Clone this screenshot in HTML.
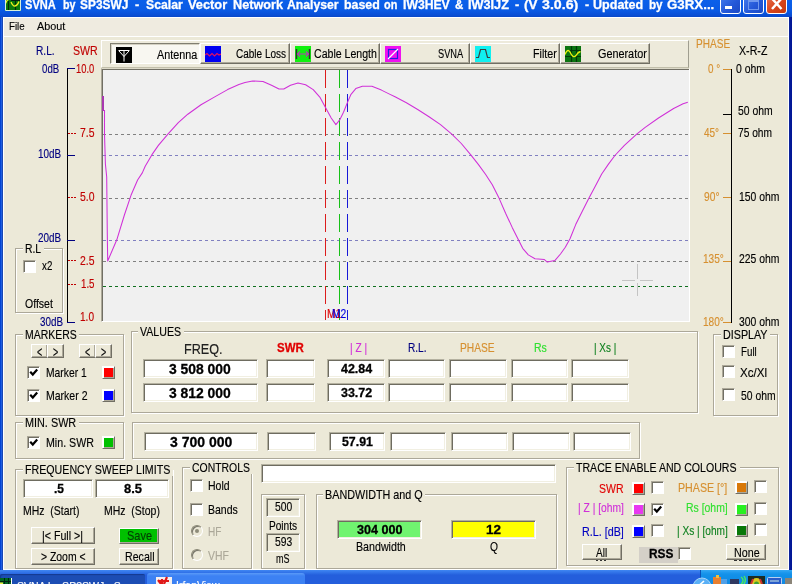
<!DOCTYPE html>
<html lang="en"><head><meta charset="utf-8"><title>SVNA by SP3SWJ</title>
<style>
html,body{margin:0;padding:0}
body{width:792px;height:584px;overflow:hidden;position:relative;background:#ECE9D8;font-family:"Liberation Sans",sans-serif;font-size:12px}
#w{position:absolute;left:0;top:0;width:792px;height:584px;overflow:hidden;will-change:transform}
#w div,#w span{position:absolute}
.t{white-space:nowrap;transform-origin:0 0;display:block;-webkit-text-stroke:0.15px}
.pre{white-space:pre}
.grp{box-sizing:border-box;border:1px solid #aca899;box-shadow:1px 1px 0 #fff,inset 1px 1px 0 #fff}
.sunk{box-sizing:border-box;border:1px solid;border-color:#b4b1a0 #fff #fff #b4b1a0;box-shadow:inset 1px 1px 0 #6e6c60,inset -1px -1px 0 #f1efe2}
.btn{box-sizing:border-box;border:1px solid;border-color:#fff #716f64 #716f64 #fff;box-shadow:inset -1px -1px 0 #aca899}
.chk{box-sizing:border-box;background:#fff;border:1px solid;border-color:#aca899 #fff #fff #aca899;box-shadow:inset 1px 1px 0 #716f64}
.csq{box-sizing:border-box;border:1px solid;border-color:#fff #716f64 #716f64 #fff;box-shadow:inset 1px 1px 0 #fff,inset -1px -1px 0 #aca899}
.rad{box-sizing:border-box;border-radius:50%;background:#ECE9D8;border:1px solid;border-color:#8a8876 #fff #fff #8a8876;box-shadow:inset 1px 1px 0 #77756a}
</style></head>
<body><div id="w">
<div style="left:0px;top:0px;width:792px;height:17px;background:linear-gradient(#0b60ea 0,#0a5ae4 60%,#0950d8 85%,#0a48c8 100%);"></div>
<div style="left:4px;top:18px;width:784px;height:18px;background:#efebe0;"></div>
<div style="left:0px;top:17px;width:3px;height:553px;background:linear-gradient(90deg,#0040d0 0,#0848d6 1px,#2060e2 1px,#1f5ce0 2px,#1a48b4 2px);"></div>
<div style="left:789px;top:17px;width:3px;height:553px;background:linear-gradient(90deg,#10289c,#041a98 50%,#001494);"></div>
<div style="left:3px;top:569px;width:786px;height:1px;background:#fff;"></div>
<div style="left:3px;top:17px;width:1px;height:552px;background:#fff;"></div>
<div style="left:788px;top:17px;width:1px;height:552px;background:#fff;"></div>
<svg style="position:absolute;left:5px;top:0" width="16" height="11" viewBox="0 0 16 11"><rect width="16" height="11" fill="#0a7a0c"/><rect x="6" y="0" width="9" height="1" fill="#021"/><path d="M3.5 1V10M10.5 1V10" stroke="#032a06" stroke-width="1.2"/><path d="M0.5 3.5 Q2 0 3.5 -0.5 M6 2 Q8 6.5 10 6 Q12.5 5.5 14 1.5" fill="none" stroke="#f0f020" stroke-width="1.3"/><path d="M0.5 0V10.5H15.5V0" fill="none" stroke="#d8f0d8" stroke-width="1"/></svg>
<span class="t" style="left:25.0px;top:-2.2px;font-size:13px;line-height:13px;color:#fff;transform:scaleX(0.853);font-weight:bold;-webkit-text-stroke:0.3px;">SVNA</span>
<span class="t" style="left:62.5px;top:-2.2px;font-size:13px;line-height:13px;color:#fff;transform:scaleX(0.824);font-weight:bold;-webkit-text-stroke:0.3px;">by</span>
<span class="t" style="left:80.0px;top:-2.2px;font-size:13px;line-height:13px;color:#fff;transform:scaleX(0.916);font-weight:bold;-webkit-text-stroke:0.3px;">SP3SWJ</span>
<span class="t" style="left:135.0px;top:-2.2px;font-size:13px;line-height:13px;color:#fff;transform:scaleX(0.970);font-weight:bold;-webkit-text-stroke:0.3px;">-</span>
<span class="t" style="left:145.8px;top:-2.2px;font-size:13px;line-height:13px;color:#fff;transform:scaleX(0.940);font-weight:bold;-webkit-text-stroke:0.3px;">Scalar</span>
<span class="t" style="left:188.3px;top:-2.2px;font-size:13px;line-height:13px;color:#fff;transform:scaleX(0.986);font-weight:bold;-webkit-text-stroke:0.3px;">Vector</span>
<span class="t" style="left:232.5px;top:-2.2px;font-size:13px;line-height:13px;color:#fff;transform:scaleX(0.975);font-weight:bold;-webkit-text-stroke:0.3px;">Network</span>
<span class="t" style="left:286.7px;top:-2.2px;font-size:13px;line-height:13px;color:#fff;transform:scaleX(0.940);font-weight:bold;-webkit-text-stroke:0.3px;">Analyser</span>
<span class="t" style="left:344.2px;top:-2.2px;font-size:13px;line-height:13px;color:#fff;transform:scaleX(0.953);font-weight:bold;-webkit-text-stroke:0.3px;">based</span>
<span class="t" style="left:384.2px;top:-2.2px;font-size:13px;line-height:13px;color:#fff;transform:scaleX(0.837);font-weight:bold;-webkit-text-stroke:0.3px;">on</span>
<span class="t" style="left:403.3px;top:-2.2px;font-size:13px;line-height:13px;color:#fff;transform:scaleX(0.937);font-weight:bold;-webkit-text-stroke:0.3px;">IW3HEV</span>
<span class="t" style="left:455.0px;top:-2.2px;font-size:13px;line-height:13px;color:#fff;transform:scaleX(0.884);font-weight:bold;-webkit-text-stroke:0.3px;">&amp;</span>
<span class="t" style="left:468.3px;top:-2.2px;font-size:13px;line-height:13px;color:#fff;transform:scaleX(0.976);font-weight:bold;-webkit-text-stroke:0.3px;">IW3IJZ</span>
<span class="t" style="left:515.0px;top:-2.2px;font-size:13px;line-height:13px;color:#fff;transform:scaleX(0.970);font-weight:bold;-webkit-text-stroke:0.3px;">-</span>
<span class="t" style="left:524.2px;top:-2.2px;font-size:13px;line-height:13px;color:#fff;transform:scaleX(1.023);font-weight:bold;-webkit-text-stroke:0.3px;">(V</span>
<span class="t" style="left:541.7px;top:-2.2px;font-size:13px;line-height:13px;color:#fff;transform:scaleX(1.092);font-weight:bold;-webkit-text-stroke:0.3px;">3.0.6)</span>
<span class="t" style="left:584.5px;top:-2.2px;font-size:13px;line-height:13px;color:#fff;transform:scaleX(0.947);font-weight:bold;-webkit-text-stroke:0.3px;">-</span>
<span class="t" style="left:593.0px;top:-2.2px;font-size:13px;line-height:13px;color:#fff;transform:scaleX(0.965);font-weight:bold;-webkit-text-stroke:0.3px;">Updated</span>
<span class="t" style="left:648.9px;top:-2.2px;font-size:13px;line-height:13px;color:#fff;transform:scaleX(0.896);font-weight:bold;-webkit-text-stroke:0.3px;">by</span>
<span class="t" style="left:666.9px;top:-2.2px;font-size:13px;line-height:13px;color:#fff;transform:scaleX(1.023);font-weight:bold;-webkit-text-stroke:0.3px;">G3RX...</span>
<div style="left:720px;top:-8px;width:21px;height:22px;background:linear-gradient(135deg,#4a82f0,#2458d8 60%,#1c49c4);border:1px solid #fff;border-radius:3px;box-sizing:border-box;overflow:hidden;"><div style="left:4px;top:13px;width:7px;height:3px;background:#fff"></div></div>
<div style="left:743px;top:-8px;width:21px;height:22px;background:linear-gradient(135deg,#4a82f0,#2458d8 60%,#1c49c4);border:1px solid #fff;border-radius:3px;box-sizing:border-box;overflow:hidden;"><div style="left:4px;top:6px;width:11px;height:11px;border:1px solid #6f98ee;border-top-width:3px;box-sizing:border-box;"></div></div>
<div style="left:766px;top:-8px;width:21px;height:22px;background:linear-gradient(135deg,#ea7a5c,#d8451c 55%,#c43a10);border:1px solid #fff;border-radius:3px;box-sizing:border-box;overflow:hidden;"><svg style="position:absolute;left:0;top:0" width="19" height="19" viewBox="0 0 19 19"><path d="M5 5.5 L14.5 16 M14.5 5.5 L5 16" stroke="#fff" stroke-width="2.5"/></svg></div>
<div style="left:3px;top:17px;width:786px;height:1px;background:#fff;"></div>
<div style="left:3px;top:36px;width:786px;height:1px;background:#fff;"></div>
<span class="t" style="left:8.6px;top:20.2px;font-size:11.6px;line-height:11.6px;color:#000;transform:scaleX(0.835);">File</span>
<span class="t" style="left:36.9px;top:20.2px;font-size:11.6px;line-height:11.6px;color:#000;transform:scaleX(0.934);">About</span>
<span class="t" style="left:35.7px;top:44.0px;font-size:13px;line-height:13px;color:#000080;transform:scaleX(0.780);">R.L.</span>
<span class="t" style="left:72.9px;top:44.0px;font-size:13px;line-height:13px;color:#c00000;transform:scaleX(0.814);">SWR</span>
<span class="t" style="left:695.8px;top:37.0px;font-size:13px;line-height:13px;color:#d69030;transform:scaleX(0.774);">PHASE</span>
<span class="t" style="left:738.7px;top:44.0px;font-size:13px;line-height:13px;color:#000;transform:scaleX(0.819);">X-R-Z</span>
<div style="left:67px;top:68px;width:1px;height:255px;background:#000;"></div>
<div style="left:67px;top:68px;width:8px;height:1px;background:#000080;"></div>
<div style="left:67px;top:155px;width:8px;height:1px;background:#000080;"></div>
<div style="left:67px;top:240px;width:8px;height:1px;background:#000080;"></div>
<div style="left:67px;top:322px;width:8px;height:1px;background:#000080;"></div>
<div style="left:68px;top:133px;width:2px;height:1px;background:#c00000;"></div>
<div style="left:71px;top:133px;width:2px;height:1px;background:#c00000;"></div>
<div style="left:74px;top:133px;width:2px;height:1px;background:#c00000;"></div>
<div style="left:68px;top:197px;width:2px;height:1px;background:#c00000;"></div>
<div style="left:71px;top:197px;width:2px;height:1px;background:#c00000;"></div>
<div style="left:74px;top:197px;width:2px;height:1px;background:#c00000;"></div>
<div style="left:68px;top:260px;width:2px;height:1px;background:#c00000;"></div>
<div style="left:71px;top:260px;width:2px;height:1px;background:#c00000;"></div>
<div style="left:74px;top:260px;width:2px;height:1px;background:#c00000;"></div>
<div style="left:68px;top:284px;width:2px;height:1px;background:#c00000;"></div>
<div style="left:71px;top:284px;width:2px;height:1px;background:#c00000;"></div>
<div style="left:74px;top:284px;width:2px;height:1px;background:#c00000;"></div>
<span class="t" style="left:42.0px;top:62.0px;font-size:13px;line-height:13px;color:#000080;transform:scaleX(0.744);">0dB</span>
<span class="t" style="left:38.0px;top:147.0px;font-size:13px;line-height:13px;color:#000080;transform:scaleX(0.761);">10dB</span>
<span class="t" style="left:38.0px;top:231.0px;font-size:13px;line-height:13px;color:#000080;transform:scaleX(0.761);">20dB</span>
<span class="t" style="left:40.1px;top:315.0px;font-size:13px;line-height:13px;color:#000080;transform:scaleX(0.758);">30dB</span>
<span class="t" style="left:75.5px;top:62.0px;font-size:13px;line-height:13px;color:#c00000;transform:scaleX(0.719);">10.0</span>
<span class="t" style="left:79.5px;top:126.0px;font-size:13px;line-height:13px;color:#c00000;transform:scaleX(0.802);">7.5</span>
<span class="t" style="left:79.5px;top:190.0px;font-size:13px;line-height:13px;color:#c00000;transform:scaleX(0.802);">5.0</span>
<span class="t" style="left:79.5px;top:254.0px;font-size:13px;line-height:13px;color:#c00000;transform:scaleX(0.802);">2.5</span>
<span class="t" style="left:80.5px;top:277.0px;font-size:13px;line-height:13px;color:#c00000;transform:scaleX(0.747);">1.5</span>
<span class="t" style="left:80.0px;top:310.0px;font-size:13px;line-height:13px;color:#c00000;transform:scaleX(0.775);">1.0</span>
<div style="left:731px;top:69px;width:1px;height:254px;background:#000;"></div>
<div style="left:723px;top:69px;width:8px;height:1px;background:#d69030;"></div>
<div style="left:723px;top:133px;width:8px;height:1px;background:#d69030;"></div>
<div style="left:723px;top:197px;width:8px;height:1px;background:#d69030;"></div>
<div style="left:723px;top:261px;width:8px;height:1px;background:#d69030;"></div>
<div style="left:723px;top:322px;width:8px;height:1px;background:#d69030;"></div>
<div style="left:723px;top:114px;width:8px;height:1px;background:#000;"></div>
<span class="t" style="left:707.8px;top:62.0px;font-size:13px;line-height:13px;color:#d69030;transform:scaleX(0.761);">0 °</span>
<span class="t" style="left:704.0px;top:126.0px;font-size:13px;line-height:13px;color:#d69030;transform:scaleX(0.768);">45°</span>
<span class="t" style="left:703.6px;top:189.5px;font-size:13px;line-height:13px;color:#d69030;transform:scaleX(0.788);">90°</span>
<span class="t" style="left:702.7px;top:252.0px;font-size:13px;line-height:13px;color:#d69030;transform:scaleX(0.777);">135°</span>
<span class="t" style="left:702.7px;top:315.0px;font-size:13px;line-height:13px;color:#d69030;transform:scaleX(0.777);">180°</span>
<span class="t" style="left:735.6px;top:62.0px;font-size:13px;line-height:13px;color:#000;transform:scaleX(0.803);">0 ohm</span>
<span class="t" style="left:737.5px;top:104.0px;font-size:13px;line-height:13px;color:#000;transform:scaleX(0.800);">50 ohm</span>
<span class="t" style="left:737.5px;top:126.0px;font-size:13px;line-height:13px;color:#000;transform:scaleX(0.784);">75 ohm</span>
<span class="t" style="left:738.7px;top:189.5px;font-size:13px;line-height:13px;color:#000;transform:scaleX(0.799);">150 ohm</span>
<span class="t" style="left:738.7px;top:252.0px;font-size:13px;line-height:13px;color:#000;transform:scaleX(0.799);">225 ohm</span>
<span class="t" style="left:738.7px;top:314.7px;font-size:13px;line-height:13px;color:#000;transform:scaleX(0.799);">300 ohm</span>
<div style="left:101px;top:40px;width:588px;height:28px;background:#edeadb;border:1px solid;border-color:#fff #a09e90 #c2bfab #fff;box-sizing:border-box;"></div>
<div style="left:110px;top:43px;width:90px;height:21px;background:#f8f7f1;border:1px solid #fff;border-top-color:#807e70;border-left-color:#807e70;box-sizing:border-box;box-shadow:inset 1px 1px 0 #d4d1c2;"></div>
<svg style="position:absolute;left:116px;top:47px" width="16" height="16" viewBox="0 0 16 16"><rect width="16" height="16" fill="#000"/><path d="M2.5 3.5H13.5M3 4L8 9.5L13 4M8 3.5V14.5" fill="none" stroke="#fff" stroke-width="1"/></svg>
<span class="t" style="left:157.0px;top:48.8px;font-size:12px;line-height:12px;color:#000;transform:scaleX(0.899);">Antenna</span>
<div style="left:200px;top:43px;width:90px;height:21px;border:1px solid;border-color:#fff #716f64 #716f64 #fff;box-shadow:inset -1px -1px 0 #aca899;box-sizing:border-box;"></div>
<svg style="position:absolute;left:205px;top:46px" width="16" height="16" viewBox="0 0 16 16"><rect width="16" height="16" fill="#0000f0"/><path d="M0 9L2 7.5L4.5 10L7 7.5L9.5 10L12 7.5L14 9L16 8" fill="none" stroke="#e01060" stroke-width="1.2"/></svg>
<span class="t" style="left:236.0px;top:47.8px;font-size:12px;line-height:12px;color:#000;transform:scaleX(0.833);">Cable Loss</span>
<div style="left:290px;top:43px;width:90px;height:21px;border:1px solid;border-color:#fff #716f64 #716f64 #fff;box-shadow:inset -1px -1px 0 #aca899;box-sizing:border-box;"></div>
<svg style="position:absolute;left:295px;top:46px" width="16" height="16" viewBox="0 0 16 16"><rect width="16" height="16" fill="#10f010"/><path d="M1.5 3V13M14.5 3V13" stroke="#303030" stroke-width="1.4"/><path d="M2.5 8H13.5M5 5.5L2.5 8L5 10.5M11 5.5L13.5 8L11 10.5" fill="none" stroke="#b040b0" stroke-width="1.2"/></svg>
<span class="t" style="left:313.6px;top:47.8px;font-size:12px;line-height:12px;color:#000;transform:scaleX(0.881);">Cable Length</span>
<div style="left:380px;top:43px;width:90px;height:21px;border:1px solid;border-color:#fff #716f64 #716f64 #fff;box-shadow:inset -1px -1px 0 #aca899;box-sizing:border-box;"></div>
<svg style="position:absolute;left:385px;top:46px" width="16" height="16" viewBox="0 0 16 16"><rect width="16" height="16" fill="#f010f0"/><rect x="3.5" y="3.5" width="9" height="9" fill="none" stroke="#2020e0" stroke-width="1.2"/><path d="M3 13L13 3" stroke="#fff" stroke-width="1.2"/></svg>
<span class="t" style="left:437.8px;top:47.8px;font-size:12px;line-height:12px;color:#000;transform:scaleX(0.771);">SVNA</span>
<div style="left:470px;top:43px;width:90px;height:21px;border:1px solid;border-color:#fff #716f64 #716f64 #fff;box-shadow:inset -1px -1px 0 #aca899;box-sizing:border-box;"></div>
<svg style="position:absolute;left:475px;top:46px" width="16" height="16" viewBox="0 0 16 16"><rect width="16" height="16" fill="#10f0f0"/><path d="M1 11.5H3.5L5.5 3.5H10.5L12.5 11.5H15" fill="none" stroke="#384040" stroke-width="1.2"/></svg>
<span class="t" style="left:532.7px;top:47.8px;font-size:12px;line-height:12px;color:#000;transform:scaleX(0.893);">Filter</span>
<div style="left:560px;top:43px;width:90px;height:21px;border:1px solid;border-color:#fff #716f64 #716f64 #fff;box-shadow:inset -1px -1px 0 #aca899;box-sizing:border-box;"></div>
<svg style="position:absolute;left:565px;top:46px" width="16" height="16" viewBox="0 0 16 16"><rect width="16" height="16" fill="#0c7410"/><path d="M6.5 0V16M11.5 0V16M4 4.5H16M0 10.5H16" stroke="#033808" stroke-width="1.2"/><path d="M0 8.5 Q2.5 2 5 6 Q8 13 11 9.5 Q13 6 15.5 5.5" fill="none" stroke="#e8f010" stroke-width="1.3"/></svg>
<span class="t" style="left:597.6px;top:47.8px;font-size:12px;line-height:12px;color:#000;transform:scaleX(0.903);">Generator</span>
<div style="left:101px;top:68px;width:589px;height:254px;background:#f0f0f0;border:1px solid #aca899;border-top-color:#dcd9c8;border-right-color:#fff;border-bottom-color:#fff;box-sizing:border-box;"></div>
<div style="left:102px;top:69px;width:587px;height:252px;border-left:1px solid #716f64;border-top:1px solid #716f64;box-sizing:border-box;"></div>
<svg style="position:absolute;left:0;top:0" width="792" height="584" viewBox="0 0 792 584"><path d="M103 134.5H689" stroke="#808080" stroke-width="1" stroke-dasharray="3 3" shape-rendering="crispEdges"/><path d="M103 198.5H689" stroke="#808080" stroke-width="1" stroke-dasharray="3 3" shape-rendering="crispEdges"/><path d="M103 261.5H689" stroke="#808080" stroke-width="1" stroke-dasharray="3 3" shape-rendering="crispEdges"/><path d="M103 155.5H689" stroke="#8080c0" stroke-width="1" stroke-dasharray="3 3" shape-rendering="crispEdges"/><path d="M103 240.5H689" stroke="#8080c0" stroke-width="1" stroke-dasharray="3 3" shape-rendering="crispEdges"/><path d="M103 286.5H689" stroke="#107020" stroke-width="1" stroke-dasharray="3 3" shape-rendering="crispEdges"/><path d="M325.5 70V320" stroke="#dc1c1c" stroke-width="1" stroke-dasharray="18 6" shape-rendering="crispEdges"/><path d="M339.5 70V320" stroke="#18c018" stroke-width="1" stroke-dasharray="18 6" shape-rendering="crispEdges"/><path d="M347.5 70V320" stroke="#1818d8" stroke-width="1" stroke-dasharray="18 6" shape-rendering="crispEdges"/><path d="M103 96V111" stroke="#a838b0" stroke-width="2"/><polyline fill="none" stroke="#d030d8" stroke-width="1.05" stroke-linejoin="round" points="104.5,110 104.5,134 105.4,164 106.7,177 107.3,234 107.7,261 116.8,239.8 124.4,215 131,195.3 137.6,180 142.3,172.9 145.2,166.3 151.8,154.9 158.4,145.4 167.9,134.1 178.3,122.7 187.8,114.2 201,104.7 214.3,97.1 227.6,89.6 238.9,84.5 245,82.6 252.6,81 263,81.4 271.5,85.2 279,89 283.8,89 290.5,85.2 298,83 305.6,84.8 313.2,89.6 319.8,97.1 325.5,107.6 331.2,118 335.9,124.6 339.7,119.9 343.5,112.3 347.7,101.9 351,94.3 355.8,88.6 362.4,86.2 371.9,86.3 381.4,90.1 389,93.9 395,96.8 406.4,102.8 417.7,109.5 429,116.7 440.5,124.6 451.8,134.1 461.3,143.5 470.8,154.9 478.3,164.4 485.5,174.2 492.3,184.8 499,198.1 505.6,213.2 512.2,227.4 518.9,240.7 522.7,248.3 528.3,254.9 535,258.7 544.4,259.6 547.3,262.1 554.8,260.6 560.5,254 565.3,247.3 570,238.8 575.7,224.6 582.3,211.3 589,198.1 595,186.7 601.7,174 608.3,164.4 614.9,155.5 624.4,145.4 636.7,134.1 645.2,127.4 658.5,118 673.6,108.5 683.1,103.8 687.8,102.3"/><path d="M637.5 264V279M637.5 283V296M622 280.5H635M640 280.5H653" stroke="#c4c4c4" stroke-width="1" shape-rendering="crispEdges"/></svg>
<span class="t" style="left:327.3px;top:307.8px;font-size:12px;line-height:12px;color:#e00000;transform:scaleX(0.860);">M1</span>
<span class="t" style="left:331.5px;top:307.8px;font-size:12px;line-height:12px;color:#0000e0;transform:scaleX(0.860);">M2</span>
<div class="grp" style="left:15px;top:248px;width:48px;height:65px;"></div>
<div style="left:22.5px;top:243px;width:21.1px;height:12px;background:#ECE9D8;"></div>
<span class="t" style="left:24.5px;top:242.0px;font-size:13px;line-height:13px;color:#000;transform:scaleX(0.796);">R.L</span>
<div class="chk" style="left:23px;top:260px;width:13px;height:13px;"></div>
<span class="t" style="left:41.9px;top:259.0px;font-size:13px;line-height:13px;color:#000;transform:scaleX(0.750);">x2</span>
<span class="t" style="left:25.4px;top:297.0px;font-size:13px;line-height:13px;color:#000;transform:scaleX(0.810);">Offset</span>
<div class="grp" style="left:15px;top:334px;width:109px;height:82px;"></div>
<div style="left:22.6px;top:329px;width:56.699999999999996px;height:12px;background:#ECE9D8;"></div>
<span class="t" style="left:24.6px;top:328.0px;font-size:13px;line-height:13px;color:#000;transform:scaleX(0.804);">MARKERS</span>
<div class="btn" style="left:31px;top:344px;width:17px;height:14px;background:#ECE9D8;"></div>
<div class="btn" style="left:47px;top:344px;width:17px;height:14px;background:#ECE9D8;"></div>
<div class="btn" style="left:79px;top:344px;width:17px;height:14px;background:#ECE9D8;"></div>
<div class="btn" style="left:95px;top:344px;width:17px;height:14px;background:#ECE9D8;"></div>
<span class="t" style="left:36.8px;top:344.3px;font-size:15px;line-height:15px;color:#000;transform:scaleX(0.594);">&lt;</span>
<span class="t" style="left:52.8px;top:344.3px;font-size:15px;line-height:15px;color:#000;transform:scaleX(0.594);">&gt;</span>
<span class="t" style="left:84.8px;top:344.3px;font-size:15px;line-height:15px;color:#000;transform:scaleX(0.594);">&lt;</span>
<span class="t" style="left:100.8px;top:344.3px;font-size:15px;line-height:15px;color:#000;transform:scaleX(0.594);">&gt;</span>
<div class="chk" style="left:27px;top:366px;width:13px;height:13px;"><svg width="13" height="13" viewBox="0 0 13 13" style="position:absolute;left:-1px;top:-1px"><path d="M3.2 5.8 L5.8 8.6 L10.2 3.6" fill="none" stroke="#000" stroke-width="2.2"/></svg></div>
<span class="t" style="left:45.5px;top:366.0px;font-size:13px;line-height:13px;color:#000;transform:scaleX(0.794);">Marker 1</span>
<div class="csq" style="left:102px;top:366px;width:13px;height:13px;background:#ff0000;"></div>
<div class="chk" style="left:27px;top:389px;width:13px;height:13px;"><svg width="13" height="13" viewBox="0 0 13 13" style="position:absolute;left:-1px;top:-1px"><path d="M3.2 5.8 L5.8 8.6 L10.2 3.6" fill="none" stroke="#000" stroke-width="2.2"/></svg></div>
<span class="t" style="left:45.5px;top:389.0px;font-size:13px;line-height:13px;color:#000;transform:scaleX(0.809);">Marker 2</span>
<div class="csq" style="left:102px;top:389px;width:13px;height:13px;background:#0000ff;"></div>
<div class="grp" style="left:15px;top:422px;width:109px;height:37px;"></div>
<div style="left:22.6px;top:417px;width:56.199999999999996px;height:12px;background:#ECE9D8;"></div>
<span class="t" style="left:24.6px;top:416.0px;font-size:13px;line-height:13px;color:#000;transform:scaleX(0.834);">MIN. SWR</span>
<div class="chk" style="left:27px;top:436px;width:13px;height:13px;"><svg width="13" height="13" viewBox="0 0 13 13" style="position:absolute;left:-1px;top:-1px"><path d="M3.2 5.8 L5.8 8.6 L10.2 3.6" fill="none" stroke="#000" stroke-width="2.2"/></svg></div>
<span class="t" style="left:45.5px;top:436.0px;font-size:13px;line-height:13px;color:#000;transform:scaleX(0.819);">Min. SWR</span>
<div class="csq" style="left:102px;top:436px;width:13px;height:13px;background:#00c000;"></div>
<div class="grp" style="left:131px;top:331px;width:567px;height:82px;"></div>
<div style="left:138px;top:326px;width:46px;height:12px;background:#ECE9D8;"></div>
<span class="t" style="left:140.0px;top:325.0px;font-size:13px;line-height:13px;color:#000;transform:scaleX(0.815);">VALUES</span>
<span class="t" style="left:183.8px;top:341.7px;font-size:14.5px;line-height:14.5px;color:#202020;transform:scaleX(0.871);">FREQ.</span>
<span class="t" style="left:277.2px;top:341.0px;font-size:13px;line-height:13px;color:#e00000;transform:scaleX(0.884);font-weight:bold;-webkit-text-stroke:0.3px;">SWR</span>
<span class="t" style="left:349.7px;top:341.0px;font-size:13px;line-height:13px;color:#d030d8;transform:scaleX(0.780);">| Z |</span>
<span class="t" style="left:407.5px;top:341.0px;font-size:13px;line-height:13px;color:#000080;transform:scaleX(0.776);">R.L.</span>
<span class="t" style="left:460.3px;top:341.0px;font-size:13px;line-height:13px;color:#d69030;transform:scaleX(0.787);">PHASE</span>
<span class="t" style="left:534.2px;top:341.0px;font-size:13px;line-height:13px;color:#30e030;transform:scaleX(0.806);">Rs</span>
<span class="t" style="left:593.6px;top:341.0px;font-size:13px;line-height:13px;color:#108020;transform:scaleX(0.762);">| Xs |</span>
<div class="sunk" style="left:143px;top:359px;width:115px;height:19px;background:#fff;"></div>
<div class="sunk" style="left:266px;top:359px;width:49px;height:19px;background:#fff;"></div>
<div class="sunk" style="left:327px;top:359px;width:58px;height:19px;background:#fff;"></div>
<div class="sunk" style="left:388px;top:359px;width:57px;height:19px;background:#fff;"></div>
<div class="sunk" style="left:449px;top:359px;width:58px;height:19px;background:#fff;"></div>
<div class="sunk" style="left:511px;top:359px;width:57px;height:19px;background:#fff;"></div>
<div class="sunk" style="left:571px;top:359px;width:58px;height:19px;background:#fff;"></div>
<div class="sunk" style="left:143px;top:383px;width:115px;height:19px;background:#fff;"></div>
<div class="sunk" style="left:266px;top:383px;width:49px;height:19px;background:#fff;"></div>
<div class="sunk" style="left:327px;top:383px;width:58px;height:19px;background:#fff;"></div>
<div class="sunk" style="left:388px;top:383px;width:57px;height:19px;background:#fff;"></div>
<div class="sunk" style="left:449px;top:383px;width:58px;height:19px;background:#fff;"></div>
<div class="sunk" style="left:511px;top:383px;width:57px;height:19px;background:#fff;"></div>
<div class="sunk" style="left:571px;top:383px;width:58px;height:19px;background:#fff;"></div>
<div class="grp" style="left:132px;top:422px;width:508px;height:37px;"></div>
<div class="sunk" style="left:144px;top:432px;width:114px;height:19px;background:#fff;"></div>
<div class="sunk" style="left:267px;top:432px;width:49px;height:19px;background:#fff;"></div>
<div class="sunk" style="left:329px;top:432px;width:56px;height:19px;background:#fff;"></div>
<div class="sunk" style="left:390px;top:432px;width:56px;height:19px;background:#fff;"></div>
<div class="sunk" style="left:451px;top:432px;width:57px;height:19px;background:#fff;"></div>
<div class="sunk" style="left:512px;top:432px;width:58px;height:19px;background:#fff;"></div>
<div class="sunk" style="left:573px;top:432px;width:58px;height:19px;background:#fff;"></div>
<span class="t pre" style="left:169.2px;top:361.7px;font-size:14.5px;line-height:14.5px;color:#000;transform:scaleX(0.958);font-weight:bold;-webkit-text-stroke:0.3px;">3 508 000</span>
<span class="t pre" style="left:169.2px;top:385.7px;font-size:14.5px;line-height:14.5px;color:#000;transform:scaleX(0.958);font-weight:bold;-webkit-text-stroke:0.3px;">3 812 000</span>
<span class="t pre" style="left:170.0px;top:434.7px;font-size:14.5px;line-height:14.5px;color:#000;transform:scaleX(0.966);font-weight:bold;-webkit-text-stroke:0.3px;">3 700 000</span>
<span class="t" style="left:340.9px;top:362.0px;font-size:13px;line-height:13px;color:#000;transform:scaleX(0.959);font-weight:bold;-webkit-text-stroke:0.3px;">42.84</span>
<span class="t" style="left:340.9px;top:386.0px;font-size:13px;line-height:13px;color:#000;transform:scaleX(0.959);font-weight:bold;-webkit-text-stroke:0.3px;">33.72</span>
<span class="t" style="left:341.6px;top:435.0px;font-size:13px;line-height:13px;color:#000;transform:scaleX(0.950);font-weight:bold;-webkit-text-stroke:0.3px;">57.91</span>
<div class="grp" style="left:713px;top:334px;width:65px;height:82px;"></div>
<div style="left:720.5px;top:329px;width:49.5px;height:12px;background:#ECE9D8;"></div>
<span class="t" style="left:722.5px;top:328.0px;font-size:13px;line-height:13px;color:#000;transform:scaleX(0.825);">DISPLAY</span>
<div class="chk" style="left:722px;top:345px;width:13px;height:13px;"></div>
<span class="t" style="left:740.5px;top:345.0px;font-size:13px;line-height:13px;color:#000;transform:scaleX(0.750);">Full</span>
<div class="chk" style="left:722px;top:365px;width:13px;height:13px;"></div>
<span class="t" style="left:740.0px;top:366.0px;font-size:13px;line-height:13px;color:#000;transform:scaleX(0.890);">Xc/Xl</span>
<div class="chk" style="left:722px;top:388px;width:13px;height:13px;"></div>
<span class="t" style="left:740.5px;top:389.0px;font-size:13px;line-height:13px;color:#000;transform:scaleX(0.796);">50 ohm</span>
<div class="grp" style="left:15px;top:469px;width:158px;height:100px;"></div>
<div style="left:22.6px;top:464px;width:150.3px;height:12px;background:#ECE9D8;"></div>
<span class="t" style="left:24.6px;top:463.0px;font-size:13px;line-height:13px;color:#000;transform:scaleX(0.820);">FREQUENCY SWEEP LIMITS</span>
<div class="sunk" style="left:23px;top:479px;width:70px;height:19px;background:#fff;"></div>
<div class="sunk" style="left:95px;top:479px;width:74px;height:19px;background:#fff;"></div>
<span class="t" style="left:54.2px;top:482.0px;font-size:13px;line-height:13px;color:#000;transform:scaleX(0.922);font-weight:bold;-webkit-text-stroke:0.3px;">.5</span>
<span class="t" style="left:123.6px;top:482.0px;font-size:13px;line-height:13px;color:#000;transform:scaleX(0.996);font-weight:bold;-webkit-text-stroke:0.3px;">8.5</span>
<span class="t pre" style="left:23.3px;top:504.0px;font-size:13px;line-height:13px;color:#000;transform:scaleX(0.805);">MHz  (Start)</span>
<span class="t pre" style="left:103.6px;top:504.0px;font-size:13px;line-height:13px;color:#000;transform:scaleX(0.806);">MHz  (Stop)</span>
<div class="btn" style="left:31px;top:527px;width:64px;height:17px;background:#ECE9D8;"></div>
<span class="t" style="left:42.0px;top:529.0px;font-size:13px;line-height:13px;color:#000;transform:scaleX(0.818);">|&lt; Full &gt;|</span>
<div class="btn" style="left:119px;top:528px;width:40px;height:16px;background:#00c000;"></div>
<span class="t" style="left:126.5px;top:529.0px;font-size:13px;line-height:13px;color:#004000;transform:scaleX(0.844);">Save</span>
<div class="btn" style="left:31px;top:548px;width:64px;height:17px;background:#ECE9D8;"></div>
<span class="t" style="left:40.5px;top:550.0px;font-size:13px;line-height:13px;color:#000;transform:scaleX(0.800);">&gt; Zoom &lt;</span>
<div class="btn" style="left:119px;top:548px;width:40px;height:17px;background:#ECE9D8;"></div>
<span class="t" style="left:124.5px;top:550.0px;font-size:13px;line-height:13px;color:#000;transform:scaleX(0.817);">Recall</span>
<div class="grp" style="left:182px;top:467px;width:70px;height:102px;"></div>
<div style="left:189.5px;top:462px;width:63.0px;height:12px;background:#ECE9D8;"></div>
<span class="t" style="left:191.5px;top:461.0px;font-size:13px;line-height:13px;color:#000;transform:scaleX(0.803);">CONTROLS</span>
<div class="chk" style="left:190px;top:479px;width:13px;height:13px;"></div>
<span class="t" style="left:208.4px;top:479.0px;font-size:13px;line-height:13px;color:#000;transform:scaleX(0.808);">Hold</span>
<div class="chk" style="left:190px;top:503px;width:13px;height:13px;"></div>
<span class="t" style="left:208.4px;top:503.0px;font-size:13px;line-height:13px;color:#000;transform:scaleX(0.808);">Bands</span>
<div class="rad" style="left:191px;top:525px;width:12px;height:12px;"><div style="left:3px;top:3px;width:4px;height:4px;border-radius:50%;background:#8e8c7a"></div></div>
<span class="t" style="left:208.4px;top:525.0px;font-size:13px;line-height:13px;color:#aca899;transform:scaleX(0.773);">HF</span>
<div class="rad" style="left:191px;top:549px;width:12px;height:12px;"></div>
<span class="t" style="left:208.4px;top:549.0px;font-size:13px;line-height:13px;color:#aca899;transform:scaleX(0.804);">VHF</span>
<div class="sunk" style="left:261px;top:464px;width:295px;height:19px;background:#fff;"></div>
<div class="grp" style="left:261px;top:494px;width:44px;height:75px;"></div>
<div class="sunk" style="left:266px;top:498px;width:34px;height:19px;background:#ECE9D8;"></div>
<span class="t" style="left:274.8px;top:500.0px;font-size:13px;line-height:13px;color:#000;transform:scaleX(0.793);">500</span>
<span class="t" style="left:268.7px;top:519.0px;font-size:13px;line-height:13px;color:#000;transform:scaleX(0.778);">Points</span>
<div class="sunk" style="left:266px;top:533px;width:34px;height:19px;background:#ECE9D8;"></div>
<span class="t" style="left:274.8px;top:535.0px;font-size:13px;line-height:13px;color:#000;transform:scaleX(0.793);">593</span>
<span class="t" style="left:275.5px;top:552.0px;font-size:13px;line-height:13px;color:#000;transform:scaleX(0.692);">mS</span>
<div class="grp" style="left:316px;top:494px;width:241px;height:75px;"></div>
<div style="left:322.5px;top:489px;width:102.69999999999999px;height:12px;background:#ECE9D8;"></div>
<span class="t" style="left:324.5px;top:488.0px;font-size:13px;line-height:13px;color:#000;transform:scaleX(0.830);">BANDWIDTH and Q</span>
<div class="sunk" style="left:337px;top:520px;width:85px;height:19px;background:#70f470;"></div>
<span class="t pre" style="left:356.8px;top:523.0px;font-size:13px;line-height:13px;color:#000;transform:scaleX(0.968);font-weight:bold;-webkit-text-stroke:0.3px;">304 000</span>
<div class="sunk" style="left:451px;top:520px;width:85px;height:19px;background:#ffff00;"></div>
<span class="t" style="left:485.5px;top:523.0px;font-size:13px;line-height:13px;color:#000;transform:scaleX(1.037);font-weight:bold;-webkit-text-stroke:0.3px;">12</span>
<span class="t" style="left:355.5px;top:540.0px;font-size:13px;line-height:13px;color:#000;transform:scaleX(0.820);">Bandwidth</span>
<span class="t" style="left:490.0px;top:540.0px;font-size:13px;line-height:13px;color:#000;transform:scaleX(0.791);">Q</span>
<div class="grp" style="left:566px;top:467px;width:213px;height:99px;"></div>
<div style="left:574px;top:462px;width:165.60000000000002px;height:12px;background:#ECE9D8;"></div>
<span class="t" style="left:576.0px;top:461.0px;font-size:13px;line-height:13px;color:#000;transform:scaleX(0.814);">TRACE ENABLE AND COLOURS</span>
<span class="t" style="left:598.8px;top:482.0px;font-size:13px;line-height:13px;color:#e00000;transform:scaleX(0.808);">SWR</span>
<div class="csq" style="left:632px;top:482px;width:13px;height:13px;background:#ff0000;"></div>
<div class="chk" style="left:651px;top:481px;width:13px;height:13px;"></div>
<span class="t" style="left:678.3px;top:481.0px;font-size:13px;line-height:13px;color:#d69030;transform:scaleX(0.820);">PHASE [°]</span>
<div class="csq" style="left:735px;top:481px;width:13px;height:13px;background:#d87808;"></div>
<div class="chk" style="left:754px;top:480px;width:13px;height:13px;"></div>
<span class="t" style="left:578.3px;top:501.0px;font-size:13px;line-height:13px;color:#d030d8;transform:scaleX(0.791);">| Z | [ohm]</span>
<div class="csq" style="left:632px;top:503px;width:13px;height:13px;background:#e838f0;"></div>
<div class="chk" style="left:651px;top:503px;width:13px;height:13px;"><svg width="13" height="13" viewBox="0 0 13 13" style="position:absolute;left:-1px;top:-1px"><path d="M3.2 5.8 L5.8 8.6 L10.2 3.6" fill="none" stroke="#000" stroke-width="2.2"/></svg></div>
<span class="t" style="left:685.9px;top:501.0px;font-size:13px;line-height:13px;color:#30e030;transform:scaleX(0.802);">Rs [ohm]</span>
<div class="csq" style="left:735px;top:503px;width:13px;height:13px;background:#28f020;"></div>
<div class="chk" style="left:754px;top:502px;width:13px;height:13px;"></div>
<span class="t" style="left:582.4px;top:524.5px;font-size:13px;line-height:13px;color:#0000c0;transform:scaleX(0.826);">R.L. [dB]</span>
<div class="csq" style="left:632px;top:525px;width:13px;height:13px;background:#0000ff;"></div>
<div class="chk" style="left:651px;top:524px;width:13px;height:13px;"></div>
<span class="t" style="left:676.8px;top:524.0px;font-size:13px;line-height:13px;color:#108020;transform:scaleX(0.778);">| Xs | [ohm]</span>
<div class="csq" style="left:735px;top:524px;width:13px;height:13px;background:#087808;"></div>
<div class="chk" style="left:754px;top:523px;width:13px;height:13px;"></div>
<div class="btn" style="left:582px;top:544px;width:40px;height:16px;background:#ECE9D8;"></div>
<span class="t" style="left:596.3px;top:546.0px;font-size:13px;line-height:13px;color:#000;transform:scaleX(0.768);">All</span>
<div class="btn" style="left:726px;top:544px;width:40px;height:16px;background:#ECE9D8;"></div>
<span class="t" style="left:733.7px;top:546.0px;font-size:13px;line-height:13px;color:#000;transform:scaleX(0.824);">None</span>
<div style="left:596px;top:560px;width:12px;height:1px;background:repeating-linear-gradient(90deg,#333 0 2px,transparent 2px 4px);"></div>
<div style="left:734px;top:560px;width:26px;height:1px;background:repeating-linear-gradient(90deg,#333 0 3px,transparent 3px 5px);"></div>
<div style="left:639px;top:547px;width:39px;height:16px;background:#d4d0c8;"></div>
<span class="t" style="left:649.3px;top:547.0px;font-size:13px;line-height:13px;color:#000;transform:scaleX(0.913);font-weight:bold;-webkit-text-stroke:0.3px;">RSS</span>
<div class="chk" style="left:678px;top:547px;width:13px;height:13px;"></div>
<div style="left:0px;top:570px;width:792px;height:14px;background:linear-gradient(#3f86f2 0,#2f6fe6 3px,#245edc 5px,#245edc 100%);"></div>
<div style="left:0px;top:574px;width:145px;height:10px;background:#1c4db4;box-shadow:inset 1px 1px 1px #143a90;border-radius:2px 2px 0 0;"></div>
<div style="left:147px;top:573px;width:158px;height:11px;background:linear-gradient(#5a9af8,#3c81f3 3px);border-radius:3px 3px 0 0;"></div>
<div style="left:700px;top:570px;width:92px;height:14px;background:linear-gradient(#35a8f4 0,#1a96ec 3px,#1290e8 5px,#0f8ae4);border-left:1px solid #0a50b8;box-sizing:border-box;"></div>
<svg style="position:absolute;left:0;top:570px" width="792" height="14" viewBox="0 570 792 14"><rect x="0" y="578" width="11" height="6" fill="#062"/><path d="M0 581.5H11M4.5 578V584M8.5 578V584" stroke="#021" stroke-width="1"/><rect x="0" y="582.5" width="3" height="1.5" fill="#ee4"/><path d="M11.5 578V584" stroke="#fff" stroke-width="1"/><rect x="156" y="577" width="16" height="7" fill="#f4f0f0"/><path d="M158 580L161 584M167 577L164 584M159 581H169M162 579V584" stroke="#e01818" stroke-width="2.2"/><circle cx="702" cy="587" r="9" fill="#5ab0f6" stroke="#a8d6fb" stroke-width="1"/><path d="M704 581L700 584.5" stroke="#fff" stroke-width="1.6"/><rect x="713" y="577" width="8" height="7" fill="#e88030"/><rect x="716" y="575" width="3" height="3" fill="#f0c040"/><rect x="721" y="579" width="6" height="5" fill="#50a0e8"/><rect x="730" y="579" width="9" height="5" fill="#303860"/><path d="M741 584A4 4 0 0 0 741 577M744 584A7 7 0 0 0 744 576" stroke="#50f050" stroke-width="1.3" fill="none"/><rect x="748" y="576" width="17" height="8" fill="#1c2c24"/><circle cx="756.5" cy="583" r="5" fill="#d8c820"/><circle cx="756.5" cy="584" r="2.5" fill="#40a030"/><path d="M751 584L753 579M762 584L760 579" stroke="#d03030" stroke-width="2"/><rect x="767.5" y="577.5" width="14" height="7" rx="1" fill="#2a5cc8" stroke="#b8d0f0" stroke-width="1"/><path d="M770 581H779" stroke="#9bd" stroke-width="1.5"/><rect x="785" y="578" width="7" height="6" fill="#8a8478"/></svg>
<span class="t" style="left:17.0px;top:580.2px;font-size:11.6px;line-height:11.6px;color:#fff;transform:scaleX(0.909);">SVNA by SP3SWJ - S...</span>
<span class="t" style="left:176.0px;top:579.2px;font-size:11.6px;line-height:11.6px;color:#fff;transform:scaleX(0.904);">IrfanView</span>
</div></body></html>
